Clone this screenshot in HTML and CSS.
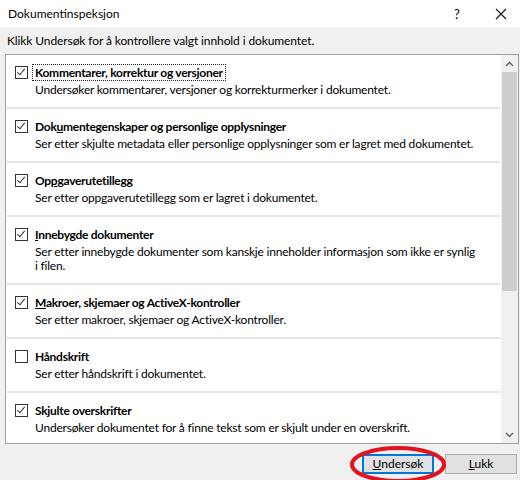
FILE: index.html
```html
<!DOCTYPE html>
<html lang="no">
<head>
<meta charset="utf-8">
<title>Dokumentinspeksjon</title>
<link rel="stylesheet" href="styles.css">
</head>
<body>
<div class="dialog">
  <div class="titlebar">
    <span class="title">Dokumentinspeksjon</span>
    <span class="help">?</span>
    <span class="close"><svg width="12" height="12" viewBox="0 0 12 12"><path d="M1 1L11 11M11 1L1 11" stroke="#111" stroke-width="1.1" fill="none"/></svg></span>
  </div>
  <div class="body">
    <p class="instr">Klikk Undersøk for å kontrollere valgt innhold i dokumentet.</p>
    <div class="listbox">
      <div class="list">
        <div class="item">
          <div class="row"><span class="cb checked"></span><span class="name focus">Kommentarer, korrektur og versjoner</span></div>
          <div class="desc">Undersøker kommentarer, versjoner og korrekturmerker i dokumentet.</div>
        </div>
        <div class="item">
          <div class="row"><span class="cb checked"></span><span class="name">Dok<u>u</u>mentegenskaper og personlige opplysninger</span></div>
          <div class="desc">Ser etter skjulte metadata eller personlige opplysninger som er lagret med dokumentet.</div>
        </div>
        <div class="item">
          <div class="row"><span class="cb checked"></span><span class="name">Op<u>p</u>gaverutetillegg</span></div>
          <div class="desc">Ser etter oppgaverutetillegg som er lagret i dokumentet.</div>
        </div>
        <div class="item">
          <div class="row"><span class="cb checked"></span><span class="name"><u>I</u>nnebygde dokumenter</span></div>
          <div class="desc">Ser etter innebygde dokumenter som kanskje inneholder informasjon som ikke er synlig<br>i filen.</div>
        </div>
        <div class="item">
          <div class="row"><span class="cb checked"></span><span class="name"><u>M</u>akroer, skjemaer og ActiveX-kontroller</span></div>
          <div class="desc">Ser etter makroer, skjemaer og ActiveX-kontroller.</div>
        </div>
        <div class="item">
          <div class="row"><span class="cb"></span><span class="name">Håndskrift</span></div>
          <div class="desc">Ser etter håndskrift i dokumentet.</div>
        </div>
        <div class="item">
          <div class="row"><span class="cb checked"></span><span class="name">Skjulte overskrifter</span></div>
          <div class="desc">Undersøker dokumentet for å finne tekst som er skjult under en overskrift.</div>
        </div>
      </div>
      <div class="scrollbar">
        <div class="arrow"><svg width="9" height="6" viewBox="0 0 9 6"><path d="M1 5L4.5 1.5L8 5" stroke="#606060" stroke-width="1.4" fill="none"/></svg></div>
        <div class="track"><div class="thumb"></div></div>
        <div class="arrow"><svg width="9" height="6" viewBox="0 0 9 6"><path d="M1 1L4.5 4.5L8 1" stroke="#606060" stroke-width="1.4" fill="none"/></svg></div>
      </div>
    </div>
    <div class="footer">
      <div class="btnwrap">
        <button class="btn default"><u>U</u>ndersøk</button>
        <svg class="annot" width="100" height="40" viewBox="0 0 100 40"><ellipse cx="50" cy="19.5" rx="46" ry="16.5" fill="none" stroke="#e3131b" stroke-width="4"/></svg>
      </div>
      <button class="btn"><u>L</u>ukk</button>
    </div>
  </div>
</div>
</body>
</html>
```

FILE: styles.css
```css
html, body {
  margin: 0;
  padding: 0;
}
body {
  width: 520px;
  height: 480px;
  overflow: hidden;
  font-family: Lato, "Noto Sans", sans-serif;
  font-size: 12px;
  color: #000;
  background: #f0f0f0;
}
.dialog {
  width: 520px;
  height: 480px;
  display: flex;
  flex-direction: column;
}
.titlebar {
  height: 27px;
  background: #fff;
  display: flex;
  align-items: center;
  flex-shrink: 0;
}
.title {
  padding-left: 8px;
  flex: 1;
}
.help {
  width: 12px;
  margin-right: 32px;
  text-align: center;
  font-size: 13px;
}
.close {
  display: flex;
  margin-right: 13px;
}
.body {
  flex: 1;
  display: flex;
  flex-direction: column;
  padding: 0 1px 0 5px;
}
.instr {
  margin: 0;
  height: 27px;
  line-height: 16px;
  padding: 6px 0 0 2px;
  box-sizing: border-box;
  letter-spacing: -0.1px;
}
.listbox {
  height: 390px;
  box-sizing: border-box;
  border: 1px solid #a0a0a0;
  background: #fff;
  display: flex;
  overflow: hidden;
}
.list {
  flex: 1;
  overflow: hidden;
}
.item {
  margin: 0 1px;
  padding: 9px 0 10px 8px;
  border-bottom: 2px solid #e5e5e5;
}
.row {
  display: flex;
  align-items: center;
  height: 17px;
}
.cb {
  width: 13px;
  height: 13px;
  box-sizing: border-box;
  border: 1px solid #333;
  margin-right: 5px;
  flex-shrink: 0;
  position: relative;
}
.cb.checked::after {
  content: "";
  position: absolute;
  left: 3px;
  top: 0px;
  width: 3px;
  height: 7px;
  border-right: 1px solid #333;
  border-bottom: 1px solid #333;
  transform: rotate(40deg);
}
.name {
  font-weight: 700;
  padding: 0 2px;
  line-height: 15px;
  letter-spacing: -0.28px;
}
.name.focus {
  outline: 1px dotted #222;
}
.desc {
  margin: 2px 0 0 20px;
  line-height: 14px;
  padding-right: 8px;
  white-space: nowrap;
  letter-spacing: -0.2px;
}
.scrollbar {
  width: 17px;
  background: #f0f0f0;
  display: flex;
  flex-direction: column;
  flex-shrink: 0;
}
.arrow {
  height: 17px;
  display: flex;
  align-items: center;
  justify-content: center;
}
.track {
  flex: 1;
  padding: 0 1px;
}
.thumb {
  height: 219px;
  background: #cdcdcd;
}
.footer {
  flex: 1;
  display: flex;
  justify-content: flex-end;
  align-items: flex-start;
  padding: 10px 2px 0 0;
  gap: 11px;
}
.btnwrap {
  position: relative;
}
.btn {
  width: 72px;
  height: 20px;
  padding: 0;
  border: 1px solid #adadad;
  background: #e1e1e1;
  font-family: inherit;
  font-size: 12px;
  color: #000;
  line-height: 16px;
}
.btn.default {
  border: 1px solid #0078d7;
  box-shadow: inset 0 0 0 1px #0078d7;
  display: block;
}
.annot {
  position: absolute;
  left: -14px;
  top: -9px;
  pointer-events: none;
}
```
